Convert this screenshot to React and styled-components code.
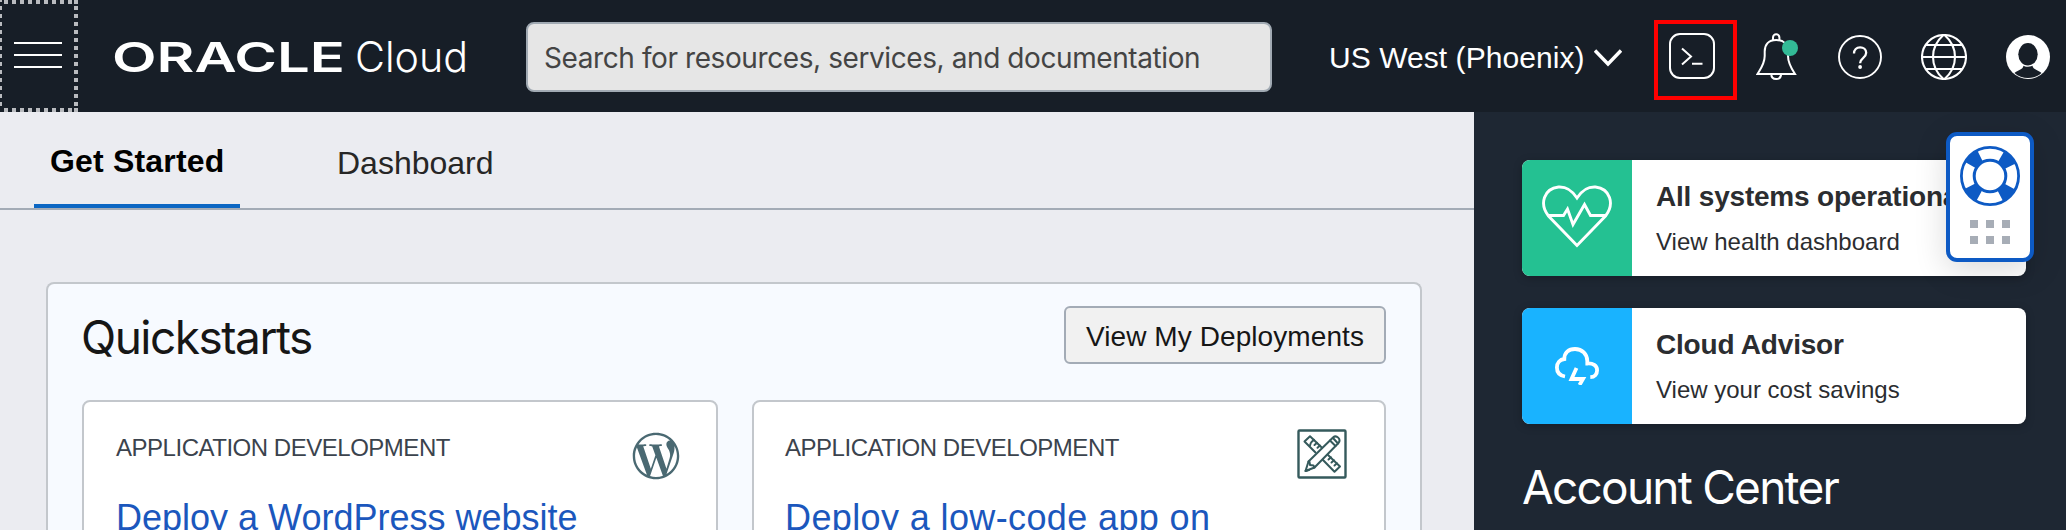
import React from "react";
import styled, { createGlobalStyle } from "styled-components";
import { FaWordpressSimple } from "react-icons/fa";

const Global = createGlobalStyle`
  * { box-sizing: border-box; }
  body { margin: 0; background: #ebecf1; overflow: hidden; }
`;

const sans = `"Liberation Sans", Arial, sans-serif`;
const inter = `Inter, "Liberation Sans", sans-serif`;

const Page = styled.div`
  width: 2066px;
  height: 530px;
  overflow: hidden;
  display: flex;
  flex-direction: column;
  font-family: ${sans};
`;

const Header = styled.header`
  flex: none;
  height: 112px;
  background: #171e27;
  display: flex;
  align-items: center;
  color: #fff;
`;

const MenuButton = styled.button`
  width: 78px;
  height: 112px;
  padding: 0 2px 2px 0;
  border: 0;
  display: flex;
  flex-direction: column;
  align-items: center;
  justify-content: center;
  gap: 10px;
  background:
    repeating-linear-gradient(90deg, transparent 0 4px, #b9bbbf 4px 8px) 0 0 / 74px 4px no-repeat,
    repeating-linear-gradient(90deg, transparent 0 4px, #b9bbbf 4px 8px) 0 100% / 74px 4px no-repeat,
    repeating-linear-gradient(180deg, #b9bbbf 0 4px, transparent 4px 8px) 0 -2px / 2px 112px no-repeat,
    repeating-linear-gradient(180deg, #b9bbbf 0 4px, transparent 4px 8px) 74px -2px / 4px 112px no-repeat,
    linear-gradient(#b9bbbf, #b9bbbf) 74px 0 / 4px 4px no-repeat,
    linear-gradient(#b9bbbf, #b9bbbf) 74px 108px / 4px 4px no-repeat;
`;

const MenuLine = styled.span`
  width: 48px;
  height: 2px;
  background: #fff;
`;

const Logo = styled.svg`
  margin-left: 32px;
  flex: none;
`;

const Search = styled.input`
  margin-left: 51px;
  margin-top: 2px;
  width: 746px;
  height: 70px;
  border: 2px solid #a1aab3;
  border-radius: 8px;
  background: #e6e6e6;
  padding: 2px 16px 0;
  font: 400 28px ${inter};
  letter-spacing: -0.41px;
  color: #444;
  &::placeholder { color: #444; opacity: 1; }
`;

const Region = styled.div`
  margin-left: 57px;
  padding-top: 4px;
  display: flex;
  align-items: center;
  gap: 9px;
  font-size: 30px;
  letter-spacing: 0.06px;
  width: 295px;
  white-space: nowrap;
`;

const IconRow = styled.nav`
  margin-left: 30px;
  display: flex;
  align-items: center;
  padding-top: 2px;
`;

const Highlight = styled.div`
  width: 83px;
  height: 80px;
  margin-top: 6px;
  border: 4px solid #f00;
  padding: 9px 0 0 11px;
`;

const Slot = styled.div`
  margin-left: ${(p) => p.$gap}px;
  display: flex;
`;

const Body = styled.div`
  flex: 1;
  display: flex;
  min-height: 0;
`;

const Main = styled.main`
  width: 1474px;
  background: #ebecf1;
  display: flex;
  flex-direction: column;
`;

const Tabs = styled.div`
  flex: none;
  height: 98px;
  border-bottom: 2px solid #a3abb6;
  display: flex;
  padding-left: 34px;
  gap: 82px;
`;

const Tab = styled.div`
  height: 96px;
  width: 206px;
  padding: ${(p) => (p.$active ? "31px 0 0 16px" : "33px 0 0 15px")};
  border-bottom: ${(p) => (p.$active ? "4px solid #0b66c3" : "0")};
  font-size: 32px;
  line-height: 37px;
  letter-spacing: ${(p) => (p.$active ? "0.18px" : "0")};
  font-weight: ${(p) => (p.$active ? 700 : 400)};
  color: ${(p) => (p.$active ? "#000" : "#262626")};
  white-space: nowrap;
`;

const Panel = styled.section`
  margin: 72px 52px 0 46px;
  flex: 1;
  border: 2px solid #c3c7cc;
  border-bottom: 0;
  border-radius: 8px 8px 0 0;
  background: #f7faff;
  padding: 22px 34px 0;
`;

const PanelHead = styled.div`
  height: 94px;
  display: flex;
  justify-content: space-between;
  align-items: flex-start;
`;

const Title = styled.h2`
  margin: ${(p) => p.$margin || "0"};
  font: 400 46px/58px ${inter};
  letter-spacing: ${(p) => p.$spacing || "0"};
  color: ${(p) => p.$color};
  white-space: nowrap;
`;

const Button = styled.button`
  width: 322px;
  height: 58px;
  padding: 3px 0 0;
  border: 2px solid #a3abb6;
  border-radius: 6px;
  background: #f1f1f1;
  font: 28px ${sans};
  letter-spacing: 0.08px;
  color: #161616;
  white-space: nowrap;
`;

const Cards = styled.div`
  display: flex;
  gap: 34px;
`;

const Card = styled.article`
  width: ${(p) => p.$width}px;
  height: 200px;
  flex: none;
  background: #fff;
  border: 2px solid #c3c7cc;
  border-radius: 8px;
  padding: 27px ${(p) => p.$right}px 0 ${(p) => p.$left}px;
`;

const CardHead = styled.div`
  display: flex;
  justify-content: space-between;
  align-items: flex-start;
  height: 68px;
`;

const Category = styled.div`
  padding-top: 5px;
  font-size: 24px;
  line-height: 28px;
  letter-spacing: -0.48px;
  color: #3b434d;
  white-space: nowrap;
`;

const CardIcon = styled.div`
  display: flex;
  padding-top: ${(p) => p.$top || 0}px;
`;

const CardLink = styled.a`
  display: block;
  font-size: 36px;
  line-height: 42px;
  color: #1b57bd;
  white-space: nowrap;
  letter-spacing: ${(p) => p.$spacing || "0"};
`;

const Sidebar = styled.aside`
  position: relative;
  flex: 1;
  background: #1e2733;
  padding: 48px 40px 0 48px;
`;

const StatusCard = styled.div`
  height: 116px;
  margin-bottom: 32px;
  display: flex;
  border-radius: 8px;
  overflow: hidden;
  background: #fff;
  box-shadow: 0 2px 8px rgba(0, 0, 0, 0.25);
`;

const StatusIcon = styled.div`
  width: 110px;
  background: ${(p) => p.$color};
  display: flex;
  align-items: center;
  justify-content: center;
`;

const StatusText = styled.div`
  padding: 20px 0 0 24px;
  color: #2b2d30;
  white-space: nowrap;
`;

const StatusTitle = styled.div`
  font-size: 28px;
  font-weight: 700;
  line-height: 34px;
  letter-spacing: -0.2px;
`;

const StatusSub = styled.div`
  margin-top: 14px;
  font-size: 24px;
  line-height: 28px;
`;

const HelpWidget = styled.div`
  position: absolute;
  left: 472px;
  top: 20px;
  width: 88px;
  height: 130px;
  border: 4px solid #0d5ac4;
  border-radius: 11px;
  background: #fff;
  box-shadow: 0 8px 32px rgba(0, 0, 0, 0.15);
  display: flex;
  flex-direction: column;
  align-items: center;
  padding-top: 10px;
`;

const Dots = styled.div`
  margin-top: 14px;
  display: grid;
  grid-template-columns: repeat(3, 8px);
  gap: 8px;
`;

const Dot = styled.span`
  height: 8px;
  background: #a7adb6;
`;

const TerminalIcon = () => (
  <svg width="46" height="46" viewBox="0 0 46 46" fill="none" stroke="#fff" strokeWidth="2">
    <rect x="1" y="1" width="44" height="44" rx="10" />
    <path d="M13 15.500l9 8-9 8M23 30.700h10.500" />
  </svg>
);

const BellIcon = () => (
  <svg width="44" height="48" viewBox="0 0 44 48" fill="none" stroke="#fff" strokeWidth="2">
    <path d="M17 7V4.500a3.200 3.200 0 0 1 6.400 0V7" />
    <path d="M1.500 41h37.500c-3.500-5.500-7-10.500-7-18v-4.500C32 11.500 28 7 20.200 7S8.700 11.500 8.700 18.500V23c0 7.500-3.700 12.500-7.200 18z" />
    <path d="M15.300 41c0 3 2 5 4.900 5s4.900-2 4.900-5" />
    <circle cx="34" cy="15" r="8" fill="#33ba96" stroke="none" />
  </svg>
);

const HelpIcon = () => (
  <svg width="44" height="44" viewBox="0 0 44 44" fill="none" stroke="#fff">
    <circle cx="22" cy="22" r="21" strokeWidth="1.900" />
    <path d="M16 18.500c0-3.800 2.500-6.200 6.100-6.200 3.500 0 6.100 2.200 6.100 5.500 0 2.800-1.600 4-3.400 5.500-1.800 1.400-2.700 2.400-2.700 4.900" strokeWidth="2.300" />
    <circle cx="22.100" cy="32" r="1.900" fill="#fff" stroke="none" />
  </svg>
);

const GlobeIcon = () => (
  <svg width="46" height="46" viewBox="0 0 46 46" fill="none" stroke="#fff" strokeWidth="2.100">
    <circle cx="23" cy="23" r="22" />
    <path d="M22.500 1c-14 12-14 32 0 44M23.500 1c14 12 14 32 0 44M5 11h36M1 23h44M5 35h36" />
  </svg>
);

const AvatarIcon = () => (
  <svg width="44" height="44" viewBox="0 0 44 44">
    <circle cx="22" cy="22" r="22" fill="#fff" />
    <path d="M8.500 38c3-3 8.500-3 9-7.500h9c.5 4.500 6 4.500 9 7.500-7 6.700-20 6.700-27 0z" fill="#171e27" />
    <ellipse cx="22" cy="19.500" rx="10.700" ry="12.300" fill="#fff" />
    <ellipse cx="22" cy="19.300" rx="9.700" ry="11.200" fill="#171e27" />
  </svg>
);

const ToolsIcon = () => (
  <svg width="50" height="50" viewBox="0 0 50 50" fill="none" stroke="#355a5c" strokeWidth="2" strokeLinejoin="round" strokeLinecap="round">
    <rect x="1.500" y="1.500" width="47" height="47" rx="1" strokeWidth="2.400" />
    <path d="M18.500 23.500L7.500 12.500l5.500-5.300L25 18.800M31 26l12 11.500-5.500 5.300L26 31" />
    <path d="M14.500 13l2.500-2.200M13 16.500l.8-2.500M17.500 16l2.500-2.200M20.500 18.800l2.500-2.200M31.500 30.500l2.500-2.200M34.500 33.500l2.500-2.200M37.500 36.500l2.500-2.200" />
    <path d="M8.500 42l3-9.500L36 8.500c3.500-3 8.500 1.500 5.500 5.500L17.500 38.500z" />
    <path d="M11.500 32.500l1 .500.500 3 3.500.500 1 2M33 11.500l5.500 5.500M36 9l5 5.500M8.500 42l3.500-1" />
  </svg>
);

const HeartIcon = () => (
  <svg width="72" height="68" viewBox="0 -1 72 68" fill="none" stroke="#fff" strokeWidth="2.900">
    <path d="M36 60.500L7.500 31C-2 19 3 3.500 17.500 2 26 1.500 31 5.500 36 13 41 5.500 46 1.500 54.500 2 69 3.500 74 19 64.500 31z" />
    <path d="M7 30.500h15.500l4-6.500 5.500 15.500 11.500-20 6 11h15.500" />
  </svg>
);

const CloudIcon = () => (
  <svg width="44" height="38" viewBox="0 0 44 38" fill="none" stroke="#fff" strokeWidth="3.800">
    <path d="M10 29.500C4.500 28.500 1.900 25 1.900 20.500c0-4.500 3-8 7.400-8.500C9.300 5.500 13.500 2 20 2c7 0 12.300 5 12.300 12v2.500c5.500-.5 9.800 2 9.800 6.700 0 4-2.500 6.800-6.800 7" />
    <path d="M21.500 21l-5 11h11.500l-3.500 6" />
  </svg>
);

const LifeBuoy = () => (
  <svg width="60" height="60" viewBox="0 0 60 60" fill="none" stroke="#0d5ac4">
    <circle cx="30" cy="30" r="22.500" strokeWidth="13" strokeDasharray="13.300 22.043" strokeDashoffset="-11.020" />
    <circle cx="30" cy="30" r="28.600" strokeWidth="2.800" />
    <circle cx="30" cy="30" r="15.800" strokeWidth="3" />
  </svg>
);

export default function App() {
  return (
    <Page>
      <Global />
      <Header>
        <MenuButton aria-label="Menu">
          <MenuLine />
          <MenuLine />
          <MenuLine />
        </MenuButton>
        <Logo width="365" height="64" viewBox="0 -10 365 64" fill="#fff">
          <text x="2" y="38" textLength="233" lengthAdjust="spacingAndGlyphs" fontFamily="Inter" fontSize="40.500" fontWeight="600">ORACLE</text>
          <text x="245" y="38" textLength="113" lengthAdjust="spacingAndGlyphs" fontFamily="Inter" fontSize="42" fontWeight="300">Cloud</text>
        </Logo>
        <Search placeholder="Search for resources, services, and documentation" />
        <Region>
          US West (Phoenix)
          <svg width="28" height="18" viewBox="0 0 28 18" fill="none" stroke="#fff" strokeWidth="3.400">
            <path d="M1 1.500l13 13.500 13-13.500" />
          </svg>
        </Region>
        <IconRow>
          <Highlight><TerminalIcon /></Highlight>
          <Slot $gap={19}><BellIcon /></Slot>
          <Slot $gap={38}><HelpIcon /></Slot>
          <Slot $gap={39}><GlobeIcon /></Slot>
          <Slot $gap={39}><AvatarIcon /></Slot>
        </IconRow>
      </Header>
      <Body>
        <Main>
          <Tabs>
            <Tab $active>Get Started</Tab>
            <Tab>Dashboard</Tab>
          </Tabs>
          <Panel>
            <PanelHead>
              <Title $color="#161616" $spacing="-1.500px" $margin="2px 0 0 -1px">Quickstarts</Title>
              <Button>View My Deployments</Button>
            </PanelHead>
            <Cards>
              <Card $width={636} $left={32} $right={36}>
                <CardHead>
                  <Category>APPLICATION DEVELOPMENT</Category>
                  <CardIcon $top={3}><FaWordpressSimple size={48} color="#4a6972" /></CardIcon>
                </CardHead>
                <CardLink>Deploy a WordPress website</CardLink>
              </Card>
              <Card $width={634} $left={31} $right={37}>
                <CardHead>
                  <Category>APPLICATION DEVELOPMENT</Category>
                  <CardIcon><ToolsIcon /></CardIcon>
                </CardHead>
                <CardLink $spacing="0.380px">Deploy a low-code app on</CardLink>
              </Card>
            </Cards>
          </Panel>
        </Main>
        <Sidebar>
          <StatusCard>
            <StatusIcon $color="#24c192"><HeartIcon /></StatusIcon>
            <StatusText>
              <StatusTitle>All systems operational</StatusTitle>
              <StatusSub>View health dashboard</StatusSub>
            </StatusText>
          </StatusCard>
          <StatusCard>
            <StatusIcon $color="#19b3ff"><CloudIcon /></StatusIcon>
            <StatusText>
              <StatusTitle>Cloud Advisor</StatusTitle>
              <StatusSub>View your cost savings</StatusSub>
            </StatusText>
          </StatusCard>
          <Title $color="#fff" $spacing="-1.750px" $margin="34px 0 0">Account Center</Title>
          <HelpWidget>
            <LifeBuoy />
            <Dots>
              <Dot /><Dot /><Dot /><Dot /><Dot /><Dot />
            </Dots>
          </HelpWidget>
        </Sidebar>
      </Body>
    </Page>
  );
}
